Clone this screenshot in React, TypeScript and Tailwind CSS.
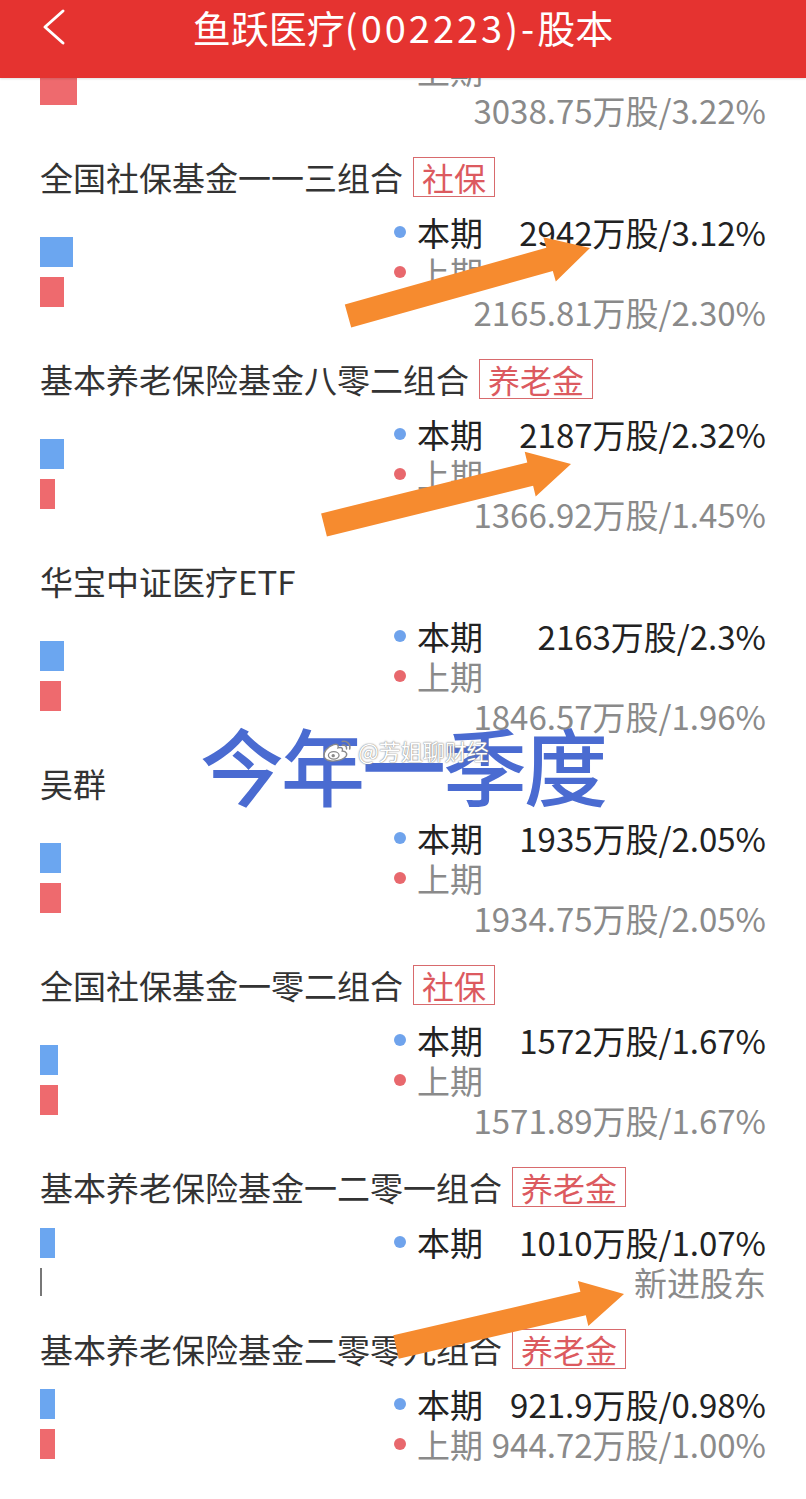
import React from "react";

type Item = {
  name?: string;
  tag?: string;
  cur?: string;
  prev?: string;
  prevInline?: boolean;
  isNew?: boolean;
  blue: number;
  red: number;
};

const items: Item[] = [
  { name: "全国社保基金一一三组合", tag: "社保", cur: "2942万股/3.12%", prev: "2165.81万股/2.30%", blue: 33, red: 24 },
  { name: "基本养老保险基金八零二组合", tag: "养老金", cur: "2187万股/2.32%", prev: "1366.92万股/1.45%", blue: 24, red: 15 },
  { name: "华宝中证医疗ETF", cur: "2163万股/2.3%", prev: "1846.57万股/1.96%", blue: 24, red: 21 },
  { name: "吴群", cur: "1935万股/2.05%", prev: "1934.75万股/2.05%", blue: 21, red: 21 },
  { name: "全国社保基金一零二组合", tag: "社保", cur: "1572万股/1.67%", prev: "1571.89万股/1.67%", blue: 18, red: 18 },
  { name: "基本养老保险基金一二零一组合", tag: "养老金", cur: "1010万股/1.07%", isNew: true, blue: 15, red: 2 },
  { name: "基本养老保险基金二零零九组合", tag: "养老金", cur: "921.9万股/0.98%", prev: "944.72万股/1.00%", prevInline: true, blue: 15, red: 15 },
];

function Dot({ color }: { color: "blue" | "red" }) {
  return (
    <span
      className={
        color === "blue"
          ? "w-[12px] h-[12px] rounded-full bg-[#6fa3ec] shrink-0"
          : "w-[12px] h-[12px] rounded-full bg-[#e8686d] shrink-0"
      }
    />
  );
}

function Body({ it, hideCur }: { it: Item; hideCur?: boolean }) {
  return (
    <div className="flex justify-between">
      <div className="flex flex-col justify-center gap-[10px]">
        <div className="h-[30px] bg-[#6ba6f0]" style={{ width: it.blue }} />
        {it.isNew ? (
          <div className="h-[28px] w-[2px] bg-[#777]" />
        ) : (
          <div className="h-[30px] bg-[#ee6a6e]" style={{ width: it.red }} />
        )}
      </div>
      <div className="w-[372px] flex flex-col text-[33px] leading-none">
        <div className="h-[40px] flex items-center">
          {!hideCur && (
            <>
              <Dot color="blue" />
              <span className="ml-[11px] text-[#222]">本期</span>
              <span className="ml-auto text-[#222]">{it.cur}</span>
            </>
          )}
        </div>
        {it.isNew ? (
          <div className="h-[40px] flex items-center justify-end text-[#8a8a8a]">新进股东</div>
        ) : (
          <div className="h-[40px] flex items-center">
            <Dot color="red" />
            <span className="ml-[11px] text-[#8a8a8a]">上期</span>
            {it.prevInline && <span className="ml-auto text-[#8a8a8a]">{it.prev}</span>}
          </div>
        )}
        {!it.isNew && !it.prevInline && (
          <div className="h-[40px] flex items-center justify-end text-[#8a8a8a]">{it.prev}</div>
        )}
      </div>
    </div>
  );
}

function Holder({ it }: { it: Item }) {
  return (
    <div className="flex flex-col">
      <div className="h-[44px] flex items-center gap-[10px] text-[33px] leading-none text-[#333]">
        <span>{it.name}</span>
        {it.tag && (
          <span className="h-[40px] px-[8px] flex items-center border-[1.5px] border-[#d86a6d] text-[#dc5a5f] text-[32px]">
            {it.tag}
          </span>
        )}
      </div>
      <div className="mt-[13px]">
        <Body it={it} />
      </div>
    </div>
  );
}

function arrowPoints(x0: number, y0: number, x1: number, y1: number, w = 24, hw = 46, hl = 42) {
  const dx = x1 - x0;
  const dy = y1 - y0;
  const L = Math.sqrt(dx * dx + dy * dy);
  const ux = dx / L;
  const uy = dy / L;
  const nx = -uy;
  const ny = ux;
  const bx = x1 - ux * hl;
  const by = y1 - uy * hl;
  const p = (x: number, y: number) => `${x.toFixed(1)},${y.toFixed(1)}`;
  return [
    p(x0 + (nx * w) / 2, y0 + (ny * w) / 2),
    p(bx + (nx * w) / 2, by + (ny * w) / 2),
    p(bx + (nx * hw) / 2, by + (ny * hw) / 2),
    p(x1, y1),
    p(bx - (nx * hw) / 2, by - (ny * hw) / 2),
    p(bx - (nx * w) / 2, by - (ny * w) / 2),
    p(x0 - (nx * w) / 2, y0 - (ny * w) / 2),
  ].join(" ");
}

export default function App() {
  return (
    <div className="relative w-[806px] h-[1499px] bg-white overflow-hidden font-['Noto_Sans_CJK_SC','Noto_Sans',sans-serif]">
      <header className="relative z-10 h-[78px] bg-[#e53330] grid grid-cols-[80px_1fr_80px] items-start pt-[3px] shadow-[0_1px_2px_rgba(0,0,0,0.12)]">
        <div className="h-[48px] flex items-center pl-[40px]">
          <svg width="28" height="38" viewBox="0 0 28 38" fill="none">
            <polyline points="23,3 5,19 23,35" stroke="white" strokeWidth="3" strokeLinecap="round" strokeLinejoin="round" />
          </svg>
        </div>
        <div className="h-[48px] flex items-center justify-center text-white text-[38px] leading-[48px]">
          <span>鱼跃医疗</span>
          <span className="tracking-[3px]">(002223)-</span>
          <span>股本</span>
        </div>
        <div />
      </header>

      <main className="h-[1421px] overflow-hidden px-[40px]">
        <div className="mt-[-68px]">
          <Body it={{ cur: "", prev: "3038.75万股/3.22%", blue: 40, red: 37 }} hideCur />
        </div>
        <div className="mt-[25px] flex flex-col gap-[25px]">
          {items.map((it, i) => (
            <Holder key={i} it={it} />
          ))}
        </div>
      </main>

      <svg className="absolute inset-0 pointer-events-none" width="806" height="1499" viewBox="0 0 806 1499">
        <polygon points={arrowPoints(348, 316, 590, 248)} fill="#f68b2f" />
        <polygon points={arrowPoints(324, 525, 571, 464)} fill="#f68b2f" />
        <polygon points={arrowPoints(396, 1347, 624, 1294)} fill="#f68b2f" />
      </svg>

      <div className="absolute left-[200px] top-[722px] text-[84px] leading-none tracking-[-3px] font-medium text-[#4a6bd1] pointer-events-none">
        今年一季度
      </div>

      <div className="absolute left-[322px] top-[737px] flex items-center gap-[4px] pointer-events-none">
        <svg width="32" height="26" viewBox="0 0 30 24" fill="none">
          <path
            d="M11 7 C5 9 1 14 2 18 C3 22 9 23 14 22 C20 21 24 18 23 15 C22 13 20 13 19 13 C20 10 18 9 15 10 C16 7 14 6 11 7 Z"
            fill="white"
            stroke="#8a8a8a"
            strokeWidth="1.3"
          />
          <ellipse cx="11" cy="17" rx="5" ry="3.5" fill="white" stroke="#8a8a8a" strokeWidth="1.2" />
          <circle cx="10.5" cy="17.3" r="1.6" fill="#8a8a8a" />
          <path d="M19 4 C23 3 27 6 26 11" stroke="#8a8a8a" strokeWidth="1.5" fill="none" strokeLinecap="round" />
          <path d="M19 7.5 C21.5 7 23.5 8.5 23 11" stroke="#8a8a8a" strokeWidth="1.4" fill="none" strokeLinecap="round" />
        </svg>
        <span className="text-[22px] leading-none text-white [text-shadow:0_0_1px_#777,0_0_2px_#999]">@芳姐聊财经</span>
      </div>
    </div>
  );
}
